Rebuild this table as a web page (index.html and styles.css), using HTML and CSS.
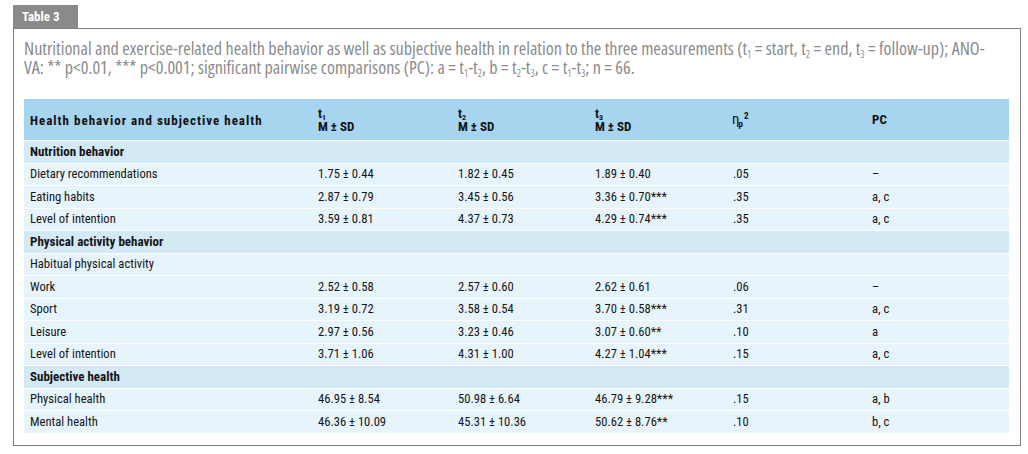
FILE: index.html
```html
<!DOCTYPE html>
<html lang="en">
<head>
<meta charset="utf-8">
<title>Table 3</title>
<link rel="stylesheet" href="styles.css">
</head>
<body>
<div class="page">
  <div class="tab">Table 3</div>
  <div class="frame">
    <p class="caption"><span class="cline">Nutritional and exercise-related health behavior as well as subjective health in relation to the three measurements (t<sub>1</sub> = start, t<sub>2</sub> = end, t<sub>3</sub> = follow-up); ANO-</span><span class="cline">VA: ** p&lt;0.01, *** p&lt;0.001; significant pairwise comparisons (PC): a = t<sub>1</sub>-t<sub>2</sub>, b = t<sub>2</sub>-t<sub>3</sub>, c = t<sub>1</sub>-t<sub>3</sub>; n = 66.</span></p>
    <table class="data">
      <colgroup>
        <col class="c-name"><col class="c-t1"><col class="c-t2"><col class="c-t3"><col class="c-eta"><col class="c-pc">
      </colgroup>
      <thead>
        <tr>
          <th class="h-name">Health behavior and subjective health</th>
          <th><span class="tl">t<sub>1</sub></span><span class="ml">M ± SD</span></th>
          <th><span class="tl">t<sub>2</sub></span><span class="ml">M ± SD</span></th>
          <th><span class="tl">t<sub>3</sub></span><span class="ml">M ± SD</span></th>
          <th class="eta">η<sub>p</sub><sup>2</sup></th>
          <th>PC</th>
        </tr>
      </thead>
      <tbody>
        <tr class="sec"><td colspan="6">Nutrition behavior</td></tr>
        <tr><td>Dietary recommendations</td><td>1.75 ± 0.44</td><td>1.82 ± 0.45</td><td>1.89 ± 0.40</td><td>.05</td><td>–</td></tr>
        <tr><td>Eating habits</td><td>2.87 ± 0.79</td><td>3.45 ± 0.56</td><td>3.36 ± 0.70***</td><td>.35</td><td>a, c</td></tr>
        <tr><td>Level of intention</td><td>3.59 ± 0.81</td><td>4.37 ± 0.73</td><td>4.29 ± 0.74***</td><td>.35</td><td>a, c</td></tr>
        <tr class="sec"><td colspan="6">Physical activity behavior</td></tr>
        <tr><td colspan="6">Habitual physical activity</td></tr>
        <tr><td>Work</td><td>2.52 ± 0.58</td><td>2.57 ± 0.60</td><td>2.62 ± 0.61</td><td>.06</td><td>–</td></tr>
        <tr><td>Sport</td><td>3.19 ± 0.72</td><td>3.58 ± 0.54</td><td>3.70 ± 0.58***</td><td>.31</td><td>a, c</td></tr>
        <tr><td>Leisure</td><td>2.97 ± 0.56</td><td>3.23 ± 0.46</td><td>3.07 ± 0.60**</td><td>.10</td><td>a</td></tr>
        <tr><td>Level of intention</td><td>3.71 ± 1.06</td><td>4.31 ± 1.00</td><td>4.27 ± 1.04***</td><td>.15</td><td>a, c</td></tr>
        <tr class="sec"><td colspan="6">Subjective health</td></tr>
        <tr><td>Physical health</td><td>46.95 ± 8.54</td><td>50.98 ± 6.64</td><td>46.79 ± 9.28***</td><td>.15</td><td>a, b</td></tr>
        <tr><td>Mental health</td><td>46.36 ± 10.09</td><td>45.31 ± 10.36</td><td>50.62 ± 8.76**</td><td>.10</td><td>b, c</td></tr>
      </tbody>
    </table>
  </div>
</div>
</body>
</html>
```

FILE: styles.css
```css
html, body {
  margin: 0;
  padding: 0;
  background: #ffffff;
}

body {
  font-family: "Roboto", "DejaVu Sans", sans-serif;
  font-stretch: 75%;
  color: #141414;
}

.page {
  padding: 5px 0 0 13px;
  width: 1008px;
}

.tab {
  display: inline-block;
  background: #8a8a8a;
  color: #ffffff;
  font-weight: bold;
  font-size: 13px;
  line-height: 23px;
  height: 23px;
  padding: 0 8px 0 9px;
  width: 48px;
}

.frame {
  border: 1px solid #808080;
  padding: 10px 10px 10px 10px;
  height: 396px;
}

.caption {
  margin: 0 0 22px 0;
  color: #8c8c8c;
  font-family: "Open Sans", "DejaVu Sans", sans-serif;
  font-stretch: 75%;
  font-size: 18.1px;
  line-height: 19px;
}

.cline {
  display: block;
  white-space: nowrap;
}

.caption sub {
  font-size: 10px;
  line-height: 0;
  vertical-align: -3px;
}

.data {
  border-collapse: collapse;
  width: 985px;
  table-layout: fixed;
  font-size: 12.6px;
}

.c-name { width: 288px; }
.c-t1 { width: 140px; }
.c-t2 { width: 137px; }
.c-t3 { width: 138px; }
.c-eta { width: 139px; }
.c-pc { width: 143px; }

.data th {
  background: #a7d4ee;
  text-align: left;
  font-weight: bold;
  font-size: 13px;
  height: 39px;
  padding: 0 6px;
  vertical-align: middle;
  line-height: 13px;
  border-bottom: 1px solid #ffffff;
  color: #111;
}

.data th.h-name {
  letter-spacing: 1px;
  padding-top: 2px;
}

.data th .tl,
.data th .ml {
  display: block;
  line-height: 13px;
}

.data th sub {
  font-size: 8px;
  line-height: 0;
  vertical-align: -2px;
}

.data th.eta {
  font-weight: normal;
  font-size: 15px;
  padding-left: 5px;
}

.data th.eta sub {
  font-size: 9px;
  font-weight: bold;
  vertical-align: -3px;
  margin-left: -1px;
}

.data th.eta sup {
  font-size: 9px;
  font-weight: bold;
  line-height: 0;
  vertical-align: 5px;
  margin-left: 1px;
}

.data td {
  background: #e8f4fb;
  height: 21.5px;
  padding: 0 6px;
  border-bottom: 1px solid #ffffff;
  line-height: 14px;
  white-space: nowrap;
}

.data tr.sec td {
  background: #d3e9f6;
  font-weight: bold;
  font-size: 13px;
}
```
